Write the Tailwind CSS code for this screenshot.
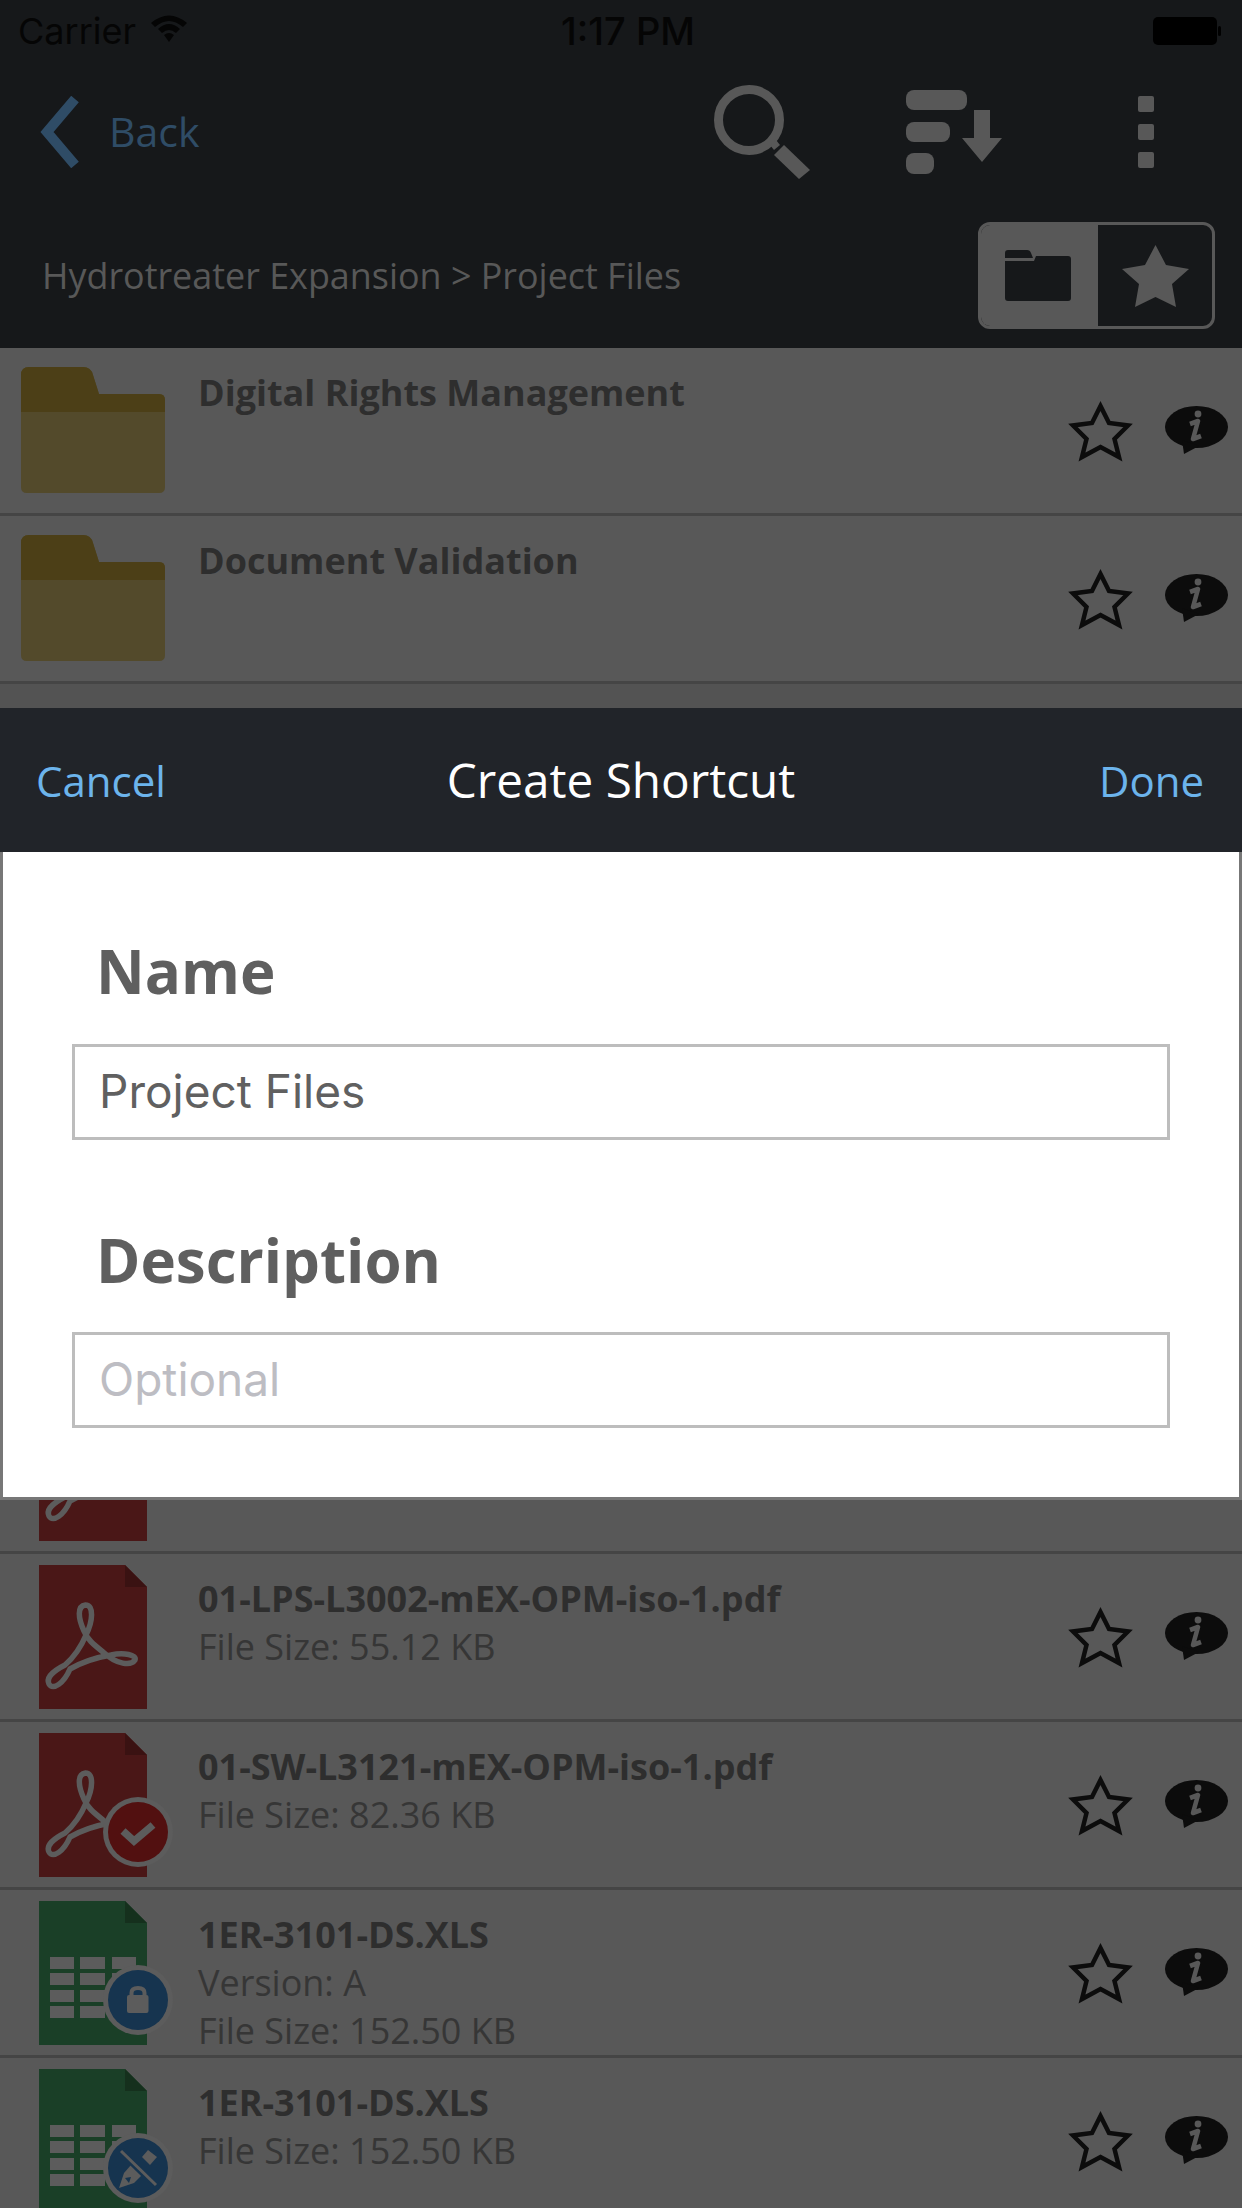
<!DOCTYPE html>
<html lang="en">
<head>
<meta charset="utf-8">
<script src="https://cdn.jsdelivr.net/npm/@tailwindcss/browser@4"></script>
</head>
<body class="m-0">
<svg width="0" height="0" class="absolute">
  <defs>
    <symbol id="star" viewBox="0 0 67 63"><path d="M33.5 7 L42 24 L61 26.5 L47.5 40 L52 58 L33.5 48 L15 58 L19.5 40 L6 26.5 L25 24 Z" fill="none" stroke="#0c0c0c" stroke-width="4.5"/></symbol>
    <symbol id="info" viewBox="0 0 63 48"><ellipse cx="31.5" cy="21" rx="31.5" ry="21" fill="#0c0c0c"/><path d="M17 34 L19 48 L34 40 Z" fill="#0c0c0c"/><circle cx="33" cy="8" r="3.4" fill="#585858"/><path d="M25 18 L33 15 L28 33 L36 30" fill="none" stroke="#585858" stroke-width="4.6" stroke-linejoin="round"/></symbol>
    <symbol id="folder" viewBox="0 0 144 126"><path d="M0 8 Q0 0 8 0 L62 0 Q70 0 72 8 L78 27 L138 27 Q144 27 144 33 L144 120 Q144 126 138 126 L6 126 Q0 126 0 120 Z" fill="#534a2b"/><path d="M0 8 Q0 0 8 0 L62 0 Q70 0 72 8 L78 27 L138 27 Q144 27 144 33 L144 45 L0 45 Z" fill="#4c3f17"/></symbol>
    <symbol id="pdf" viewBox="0 0 108 144"><path d="M0 0 H86 L108 22 V144 H0 Z" fill="#4a1717"/><path d="M86 0 L108 22 H86 Z" fill="#3a1212"/><path d="M45 66 C39 53 38 41 46.500 40 C55 40 54 56 47 70 C42 82 34 93 26 100 C14 106 7 113 10 119 C14 126 25 118 31 104 C45 96 60 92 72 90 C85 87 98 90 96 95 C92 101 78 100 64 87 C54 79 48 74 45 66 Z" fill="none" stroke="#5c5c5c" stroke-width="5.5" stroke-linejoin="round"/></symbol>
    <symbol id="xls" viewBox="0 0 108 144"><path d="M0 0 H86 L108 22 V144 H0 Z" fill="#1a3f27"/><path d="M86 0 L108 22 H86 Z" fill="#15301d"/><g fill="#5c5c5c"><rect x="11" y="56" width="24" height="12"/><rect x="41" y="56" width="25" height="12"/><rect x="73" y="56" width="24" height="12"/><rect x="11" y="72" width="24" height="12"/><rect x="41" y="72" width="25" height="12"/><rect x="73" y="72" width="24" height="12"/><rect x="11" y="89" width="24" height="12"/><rect x="41" y="89" width="25" height="12"/><rect x="11" y="105" width="24" height="12"/><rect x="41" y="105" width="25" height="12"/></g></symbol>
  </defs>
</svg>

<div class="relative w-[1242px] h-[2208px] overflow-hidden bg-[#585858] font-['Open_Sans',sans-serif]">

  <header class="h-[348px] bg-[#16181a] flex flex-col">
    <div class="h-[62px] flex items-center pl-[18px] font-['Inter',sans-serif] text-[36px] text-[#050505]">
      <div class="w-[543px] flex items-center">
        <span>Carrier</span>
        <svg class="ml-[14px] mb-[6px]" width="38" height="28" viewBox="0 0 38 28"><path d="M1 9 Q19 -6 37 9 L33 13 Q19 1 5 13 Z M8 15 Q19 5 30 15 L26 19 Q19 13 12 19 Z M14 21 Q19 17 24 21 L19 28 Z" fill="#050505"/></svg>
      </div>
      <span class="font-medium text-[38px]">1:17 PM</span>
      <svg class="ml-auto mr-[20px]" width="70" height="30" viewBox="0 0 70 30"><rect x="1" y="1" width="64" height="28" rx="5" fill="#000"/><rect x="66" y="10" width="3" height="10" rx="1.5" fill="#000"/></svg>
    </div>

    <nav class="h-[140px] flex items-center pl-[40px]">
      <svg width="40" height="72" viewBox="0 0 40 72"><path d="M35 3 L7 36 L35 69" fill="none" stroke="#2f4c66" stroke-width="10"/></svg>
      <span class="ml-[29px] text-[41px] text-[#2f4c66]">Back</span>
      <svg class="ml-auto" width="96" height="94" viewBox="0 0 96 94"><ellipse cx="35" cy="35" rx="30.5" ry="30.5" fill="none" stroke="#585858" stroke-width="9"/><path d="M56 60 L62 55 L66 60 L60 65 Z" fill="#585858"/><path d="M70 60 L96 85 L85 94 L60 70 Z" fill="#585858"/></svg>
      <svg class="ml-[96px]" width="96" height="84" viewBox="0 0 96 84"><rect x="0" y="0" width="61" height="20" rx="8" fill="#585858"/><rect x="0" y="32" width="44" height="20" rx="8" fill="#585858"/><rect x="0" y="63" width="28" height="21" rx="8" fill="#585858"/><path d="M68 20 H84 V48 H96 L76 72 L56 48 H68 Z" fill="#585858"/></svg>
      <div class="ml-[136px] mr-[88px] flex flex-col gap-[12px]">
        <div class="w-[16px] h-[16px] rounded-[2px] bg-[#585858]"></div>
        <div class="w-[16px] h-[16px] rounded-[2px] bg-[#585858]"></div>
        <div class="w-[16px] h-[16px] rounded-[2px] bg-[#585858]"></div>
      </div>
    </nav>

    <div class="h-[146px] pt-[20px] pb-[19px] pl-[42px] pr-[27px] flex items-center justify-between">
      <span class="text-[35.9px] text-[#585858]">Hydrotreater Expansion &gt; Project Files</span>
      <div class="w-[237px] h-[107px] flex rounded-[12px] border-[3px] border-[#585858] overflow-hidden">
        <div class="w-[117px] bg-[#585858] flex items-center justify-center">
          <svg class="mr-[3px]" width="66" height="51" viewBox="0 0 66 51"><path d="M0 3 Q0 0 3 0 L22 0 Q25 0 26 3 L28 8 L0 8 Z" fill="#16181a"/><path d="M0 11 L29 11 L31 6 L63 6 Q66 6 66 9 L66 48 Q66 51 63 51 L3 51 Q0 51 0 48 Z" fill="#16181a"/></svg>
        </div>
        <div class="flex-1 flex items-center justify-center">
          <svg width="67" height="62" viewBox="0 0 67 62"><path d="M33.5 0 L44 20 L67 24 L50 39 L54 62 L33.5 52 L13 62 L17 39 L0 24 L23 20 Z" fill="#585858"/></svg>
        </div>
      </div>
    </div>
  </header>

  <main>
    <div class="h-[168px] border-b-[3px] border-[#454545] flex items-start pl-[21px] pr-[14px]">
      <svg class="mt-[19px] shrink-0" width="144" height="126"><use href="#folder"/></svg>
      <div class="ml-[33px] pt-[21px] text-[36px] leading-[48px] font-bold text-[#2e2e2e]">Digital Rights Management</div>
      <svg class="ml-auto mt-[51px]" width="67" height="63"><use href="#star"/></svg>
      <svg class="ml-[31px] mt-[58px]" width="63" height="48"><use href="#info"/></svg>
    </div>
    <div class="h-[168px] border-b-[3px] border-[#454545] flex items-start pl-[21px] pr-[14px]">
      <svg class="mt-[19px] shrink-0" width="144" height="126"><use href="#folder"/></svg>
      <div class="ml-[33px] pt-[21px] text-[36px] leading-[48px] font-bold text-[#2e2e2e]">Document Validation</div>
      <svg class="ml-auto mt-[51px]" width="67" height="63"><use href="#star"/></svg>
      <svg class="ml-[31px] mt-[58px]" width="63" height="48"><use href="#info"/></svg>
    </div>

    <div class="h-[702px] bg-[#535353]"></div>

    <div class="h-[168px] border-b-[3px] border-[#454545] flex items-start pl-[39px] pr-[14px]">
      <svg class="mt-[11px] shrink-0" width="108" height="144"><use href="#pdf"/></svg>
    </div>

    <div class="h-[168px] border-b-[3px] border-[#454545] flex items-start pl-[39px] pr-[14px]">
      <svg class="mt-[11px] shrink-0" width="108" height="144"><use href="#pdf"/></svg>
      <div class="ml-[51px] pt-[21px] text-[36px] leading-[48px] text-[#363636]">
        <div class="font-bold text-[#2e2e2e]">01-LPS-L3002-mEX-OPM-iso-1.pdf</div>
        <div>File Size: 55.12 KB</div>
      </div>
      <svg class="ml-auto mt-[51px]" width="67" height="63"><use href="#star"/></svg>
      <svg class="ml-[31px] mt-[58px]" width="63" height="48"><use href="#info"/></svg>
    </div>

    <div class="h-[168px] border-b-[3px] border-[#454545] flex items-start pl-[39px] pr-[14px]">
      <div class="relative mt-[11px] shrink-0 w-[108px] h-[144px]">
        <svg class="block" width="108" height="144"><use href="#pdf"/></svg>
        <svg class="absolute left-[64px] top-[64px]" width="70" height="70" viewBox="0 0 70 70"><circle cx="35" cy="35" r="35" fill="#5c5c5c"/><circle cx="35" cy="35" r="30" fill="#521010"/><path d="M20 34 L31 44 L50 28" fill="none" stroke="#5c5c5c" stroke-width="7.5"/></svg>
      </div>
      <div class="ml-[51px] pt-[21px] text-[36px] leading-[48px] text-[#363636]">
        <div class="font-bold text-[#2e2e2e]">01-SW-L3121-mEX-OPM-iso-1.pdf</div>
        <div>File Size: 82.36 KB</div>
      </div>
      <svg class="ml-auto mt-[51px]" width="67" height="63"><use href="#star"/></svg>
      <svg class="ml-[31px] mt-[58px]" width="63" height="48"><use href="#info"/></svg>
    </div>

    <div class="h-[168px] border-b-[3px] border-[#454545] flex items-start pl-[39px] pr-[14px]">
      <div class="relative mt-[11px] shrink-0 w-[108px] h-[144px]">
        <svg class="block" width="108" height="144"><use href="#xls"/></svg>
        <svg class="absolute left-[64px] top-[64px]" width="70" height="70" viewBox="0 0 70 70"><circle cx="35" cy="35" r="35" fill="#5c5c5c"/><circle cx="35" cy="35" r="30" fill="#16344f"/><path d="M28.500 32 V28 Q28.500 23 35 23 Q41.500 23 41.500 28 V32" fill="none" stroke="#5c5c5c" stroke-width="4"/><rect x="24" y="30" width="21.500" height="18" rx="2" fill="#5c5c5c"/></svg>
      </div>
      <div class="ml-[51px] pt-[21px] text-[36px] leading-[48px] text-[#363636]">
        <div class="font-bold text-[#2e2e2e]">1ER-3101-DS.XLS</div>
        <div>Version: A</div>
        <div>File Size: 152.50 KB</div>
      </div>
      <svg class="ml-auto mt-[51px]" width="67" height="63"><use href="#star"/></svg>
      <svg class="ml-[31px] mt-[58px]" width="63" height="48"><use href="#info"/></svg>
    </div>

    <div class="h-[150px] flex items-start pl-[39px] pr-[14px]">
      <div class="relative mt-[11px] shrink-0 w-[108px] h-[144px]">
        <svg class="block" width="108" height="144"><use href="#xls"/></svg>
        <svg class="absolute left-[64px] top-[64px]" width="70" height="70" viewBox="0 0 70 70"><circle cx="35" cy="35" r="35" fill="#5c5c5c"/><circle cx="35" cy="35" r="30" fill="#16344f"/><path d="M39 24 L45 17 L54 24 L47 32 Z" fill="#5c5c5c"/><path d="M28 32 L39 42 L31 50 L16 55 L21 40 Z" fill="#5c5c5c"/><path d="M22 45 L28 44 L26 50 Z" fill="#16344f"/><path d="M18 18 L53 52" stroke="#16344f" stroke-width="8"/><path d="M18 18 L53 52" stroke="#5c5c5c" stroke-width="3"/></svg>
      </div>
      <div class="ml-[51px] pt-[21px] text-[36px] leading-[48px] text-[#363636]">
        <div class="font-bold text-[#2e2e2e]">1ER-3101-DS.XLS</div>
        <div>File Size: 152.50 KB</div>
      </div>
      <svg class="ml-auto mt-[51px]" width="67" height="63"><use href="#star"/></svg>
      <svg class="ml-[31px] mt-[58px]" width="63" height="48"><use href="#info"/></svg>
    </div>
  </main>

  <section class="absolute left-0 top-[708px] w-[1242px]">
    <div class="relative h-[144px] bg-[#212429] flex items-center justify-between pl-[36px] pr-[38px]">
      <span class="text-[42px] text-[#6cb4ec]">Cancel</span>
      <span class="absolute left-0 right-0 text-center text-[47.7px] text-white">Create Shortcut</span>
      <span class="text-[42px] text-[#6cb4ec]">Done</span>
    </div>
    <div class="h-[648px] bg-white border-x-[3px] border-b-[3px] border-[#777777] pl-[69px] pr-[69px] pt-[79px]">
      <div class="h-[80px] leading-[80px] pl-[24px] text-[60px] font-bold text-[#5f5f5f]">Name</div>
      <div class="mt-[33px] h-[96px] border-[3px] border-[#bdbdbd] flex items-center pl-[24px] pb-[2px] font-['Inter',sans-serif] text-[46px] text-[#606060]">Project Files</div>
      <div class="mt-[80px] h-[80px] leading-[80px] pl-[24px] text-[60px] font-bold text-[#5f5f5f]">Description</div>
      <div class="mt-[32px] h-[96px] border-[3px] border-[#bdbdbd] flex items-center pl-[24px] pb-[2px] font-['Inter',sans-serif] text-[46px] text-[#bdbdc3]">Optional</div>
    </div>
  </section>
</div>
</body>
</html>
